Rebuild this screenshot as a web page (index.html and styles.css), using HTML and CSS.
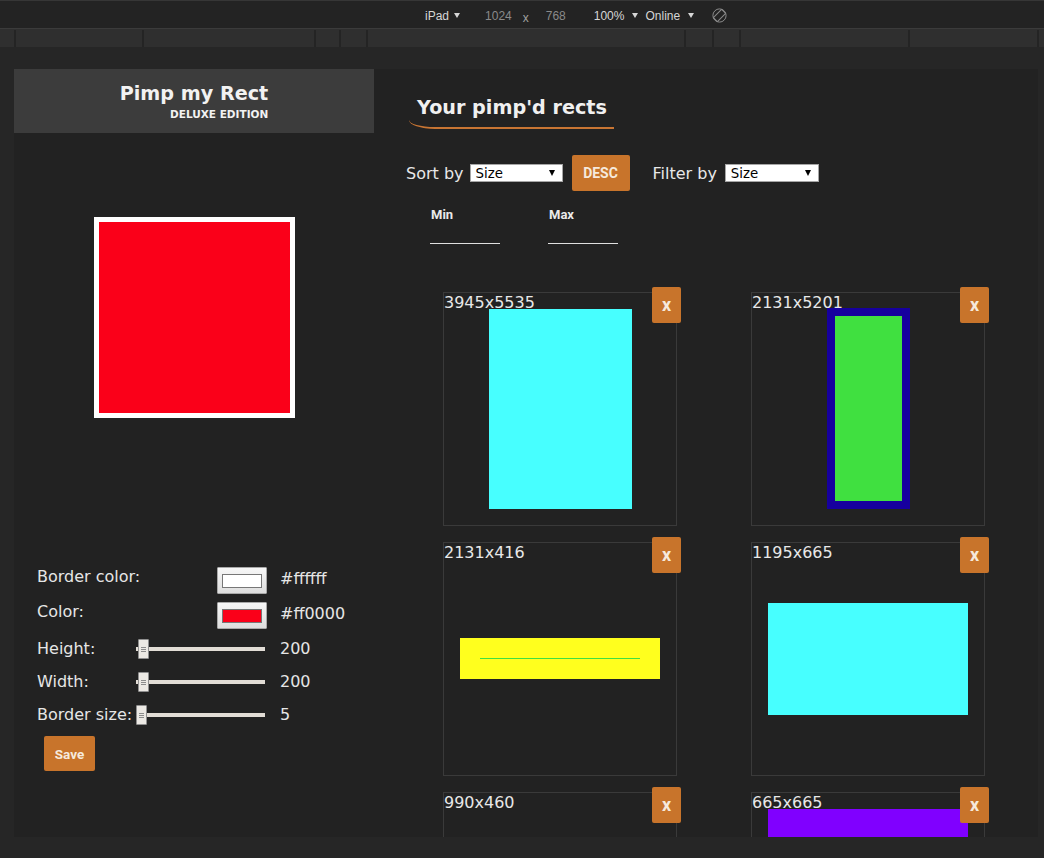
FILE: index.html
```html
<!DOCTYPE html>
<html lang="en">
<head>
<meta charset="utf-8">
<title>Pimp my Rect</title>
<link rel="stylesheet" href="styles.css">
</head>
<body>
<div class="toolbar">
  <span class="tb-text">iPad</span><span class="tb-caret tb-caret-1"></span>
  <span class="tb-dim tb-w">1024</span>
  <span class="tb-times">x</span>
  <span class="tb-dim tb-h">768</span>
  <span class="tb-text tb-zoom">100%</span><span class="tb-caret tb-caret-2"></span>
  <span class="tb-text tb-online">Online</span><span class="tb-caret tb-caret-3"></span>
  <svg class="tb-rotate" width="15" height="15" viewBox="0 0 15 15" aria-hidden="true">
    <circle cx="7.5" cy="7.5" r="6.6" fill="none" stroke="#8a8a8a" stroke-width="1"/>
    <rect x="4.6" y="1.6" width="5.8" height="11.8" rx="0.8" fill="none" stroke="#8a8a8a" stroke-width="1" transform="rotate(45 7.5 7.5)"/>
  </svg>
</div>
<div class="mqbar">
  <span class="seg s1"></span><span class="seg s2"></span><span class="seg s3"></span><span class="seg s4"></span><span class="seg s5"></span><span class="seg s6"></span><span class="seg s7"></span><span class="seg s8"></span><span class="seg s9"></span><span class="seg s10"></span><span class="seg s11"></span>
</div>
<div class="gap-strip"></div>
<div class="viewport">
  <aside class="left">
    <header class="brand">
      <div class="brand-inner">
        <div class="brand-title">Pimp my Rect</div>
        <div class="brand-sub">DELUXE EDITION</div>
      </div>
    </header>
    <div class="preview"></div>
    <div class="controls">
      <span class="c-label">Border color:</span>
      <span class="c-ctl c-ctl-color"><span class="color-input"><span class="swatch swatch-white"></span></span></span>
      <span class="c-val c-val-color">#ffffff</span>

      <span class="c-label">Color:</span>
      <span class="c-ctl c-ctl-color"><span class="color-input"><span class="swatch swatch-red"></span></span></span>
      <span class="c-val c-val-color">#ff0000</span>

      <span class="c-label">Height:</span>
      <span class="c-ctl"><span class="slider"><span class="track"></span><span class="thumb"><span class="grip"></span></span></span></span>
      <span class="c-val">200</span>

      <span class="c-label">Width:</span>
      <span class="c-ctl"><span class="slider"><span class="track"></span><span class="thumb"><span class="grip"></span></span></span></span>
      <span class="c-val">200</span>

      <span class="c-label">Border size:</span>
      <span class="c-ctl"><span class="slider"><span class="track"></span><span class="thumb thumb-min"><span class="grip"></span></span></span></span>
      <span class="c-val">5</span>
    </div>
    <button class="btn save">Save</button>
  </aside>

  <main class="right">
    <h2 class="title">Your pimp'd rects</h2>
    <div class="sortbar">
      <span class="bar-label">Sort by</span>
      <span class="select sel-sort"><span class="sel-text">Size</span><span class="sel-caret"></span></span>
      <button class="btn desc">DESC</button>
      <span class="bar-label filter-label">Filter by</span>
      <span class="select sel-filter"><span class="sel-text">Size</span><span class="sel-caret"></span></span>
    </div>
    <div class="range">
      <div class="range-field">
        <span class="range-label">Min</span>
        <input class="range-input" type="text" aria-label="Min">
      </div>
      <div class="range-field range-max">
        <span class="range-label">Max</span>
        <input class="range-input" type="text" aria-label="Max">
      </div>
    </div>
    <div class="cards">
      <div class="card">
        <div class="rect" style="width:143px;height:200px;background:#47ffff"></div>
        <span class="card-label">3945x5535</span>
        <button class="btn del">x</button>
      </div>
      <div class="card">
        <div class="rect rect-odd" style="width:83px;height:201px;background:#40e040;border:8px solid #16009e"></div>
        <span class="card-label">2131x5201</span>
        <button class="btn del">x</button>
      </div>
      <div class="card">
        <div class="rect rect-odd" style="width:200px;height:41px;background:#40e040;border:20px solid #ffff1e"></div>
        <span class="card-label">2131x416</span>
        <button class="btn del">x</button>
      </div>
      <div class="card">
        <div class="rect" style="width:200px;height:112px;background:#47ffff"></div>
        <span class="card-label">1195x665</span>
        <button class="btn del">x</button>
      </div>
      <div class="card">
        <div class="rect rect-odd" style="width:200px;height:93px;background:#ff8c00"></div>
        <span class="card-label">990x460</span>
        <button class="btn del">x</button>
      </div>
      <div class="card">
        <div class="rect" style="width:200px;height:200px;background:#8000ff"></div>
        <span class="card-label">665x665</span>
        <button class="btn del">x</button>
      </div>
    </div>
  </main>
</div>
</body>
</html>
```
FILE: styles.css
```css
* { box-sizing: border-box; }
html, body { margin: 0; padding: 0; }
body {
  width: 1044px;
  height: 858px;
  overflow: hidden;
  background: #262626;
  font-family: "DejaVu Sans", Verdana, sans-serif;
}

/* ---------- devtools toolbar ---------- */
.toolbar {
  height: 29px;
  background: #232323;
  border-top: 1px solid #363636;
  border-bottom: 1px solid #3b3b3b;
  display: flex;
  align-items: center;
  padding-left: 425px;
  padding-top: 3px;
  font-family: "Liberation Sans", Arial, sans-serif;
  font-size: 12px;
  color: #d6d6d6;
}
.tb-text { color: #d6d6d6; }
.tb-dim { color: #8a8a8a; }
.tb-times { color: #a0a0a0; margin-left: 11px; position: relative; top: 2px; }
.tb-caret {
  width: 0; height: 0;
  border-left: 3px solid transparent;
  border-right: 3px solid transparent;
  border-top: 5px solid #d6d6d6;
  position: relative;
  top: -1px;
}
.tb-caret-1 { margin-left: 5px; }
.tb-w { margin-left: 25px; }
.tb-h { margin-left: 17px; }
.tb-zoom { margin-left: 28px; }
.tb-caret-2 { margin-left: 8px; }
.tb-online { margin-left: 7px; }
.tb-caret-3 { margin-left: 8px; }
.tb-rotate { margin-left: 18px; position: relative; top: -1px; }

/* ---------- media query ruler ---------- */
.mqbar {
  height: 18px;
  background: #2f2f2f;
  display: flex;
  padding-top: 1px;
}
.seg { height: 17px; border-right: 2px solid #242424; }
.s1 { width: 16px; }
.s2 { width: 128px; }
.s3 { width: 172px; }
.s4 { width: 25px; }
.s5 { width: 27px; }
.s6 { width: 318px; }
.s7 { width: 28px; }
.s8 { width: 27px; }
.s9 { width: 169px; }
.s10 { width: 129px; }
.s11 { flex: 1; border-right: 0; }
.gap-strip { height: 22px; }

/* ---------- emulated viewport ---------- */
.viewport {
  margin-left: 14px;
  width: 1024px;
  height: 768px;
  background: #222222;
  overflow: hidden;
  display: flex;
  color: #e6e6e6;
  font-size: 16px;
}

/* ---------- left column ---------- */
.left { width: 360px; flex: none; }
.brand {
  height: 64px;
  background: #3c3c3c;
  display: flex;
  justify-content: center;
  padding-top: 14px;
}
.brand-inner { text-align: right; color: #f2f2f2; }
.brand-title { font-weight: bold; font-size: 19.2px; line-height: 22px; }
.brand-sub { font-weight: bold; font-size: 10.5px; line-height: 13px; margin-top: 2.5px; }

.preview {
  width: 201px;
  height: 201px;
  margin: 84px auto 0;
  border: 5px solid #ffffff;
  background: #fa0019;
}

.controls {
  margin-top: 149px;
  padding-left: 23px;
  display: grid;
  grid-template-columns: 99px 131px auto;
  grid-template-rows: 35px 37px 33px 33px 31px;
  align-items: start;
}
.c-label { white-space: nowrap; line-height: 19px; }
.c-ctl { display: flex; }
.c-ctl-color { justify-content: flex-end; }
.c-val { line-height: 19px; padding-left: 13px; }
.c-val-color { padding-top: 2px; }

.color-input {
  width: 50px;
  height: 27px;
  border: 1px solid #a9a9a9;
  border-radius: 1px;
  background: linear-gradient(#f7f7f7, #dedede);
  display: flex;
  align-items: center;
  justify-content: center;
}
.swatch { width: 40px; height: 14px; border: 1px solid #777777; }
.swatch-white { background: #ffffff; }
.swatch-red { background: #fa0019; }

.slider { position: relative; width: 129px; height: 20px; }
.track { display: block; height: 4px; margin-top: 8px; background: #e2ddd6; }
.thumb {
  position: absolute;
  left: 2px;
  top: 0;
  width: 11px;
  height: 20px;
  background: #ece9e4;
  border: 1px solid #8f8f8f;
  border-radius: 1px;
}
.thumb-min { left: 0; }
.grip {
  display: block;
  width: 5px;
  height: 5px;
  margin: 7px auto 0;
  background: repeating-linear-gradient(to bottom, #8c8c8c 0 1px, transparent 1px 2px);
}

.btn {
  border: 0;
  border-radius: 2px;
  background: #c8742b;
  color: #f6e9dc;
  font-family: Roboto, "Liberation Sans", sans-serif;
  font-weight: bold;
  padding: 0;
  cursor: pointer;
}
.save {
  display: block;
  width: 51px;
  height: 35px;
  margin-left: 30px;
  font-size: 13.5px;
}

/* ---------- right column ---------- */
.right { flex: 1; padding-top: 28px; }
.title {
  display: inline-block;
  margin: 0 0 0 35px;
  padding: 0 7px 8px 8px;
  font-size: 19.2px;
  line-height: 22px;
  font-weight: bold;
  color: #f0f0f0;
  border-bottom: 2px solid #c87533;
  border-bottom-left-radius: 26px 9px;
}

.sortbar {
  margin-top: 26px;
  height: 36px;
  padding-left: 32px;
  display: flex;
  align-items: center;
}
.bar-label { color: #e8e8e8; }
.select {
  width: 93px;
  height: 18px;
  background: #ffffff;
  border: 1px solid #a6a6a6;
  display: flex;
  align-items: center;
  justify-content: space-between;
  padding: 0 7px 0 5px;
  color: #000;
  font-size: 13.33px;
}
.sel-sort { margin-left: 6px; }
.sel-filter { margin-left: 8px; width: 94px; }
.sel-text { line-height: 16px; padding-top: 1px; }
.sel-caret {
  width: 0; height: 0;
  border-left: 3px solid transparent;
  border-right: 3px solid transparent;
  border-top: 6px solid #000;
}
.desc {
  width: 58px;
  height: 36px;
  margin-left: 9px;
  font-size: 14px;
}
.filter-label { margin-left: 23px; }

.range {
  margin-top: 16px;
  padding-left: 56px;
  display: flex;
}
.range-field { display: flex; flex-direction: column; width: 70px; }
.range-max { margin-left: 48px; }
.range-label {
  font-family: Roboto, "Liberation Sans", sans-serif;
  font-weight: bold;
  font-size: 13px;
  line-height: 15px;
  padding-left: 1px;
  color: #eaeaea;
}
.range-input {
  width: 70px;
  height: 21px;
  margin-top: 1px;
  border: 0;
  border-bottom: 1px solid #e0e0e0;
  background: transparent;
  color: #e6e6e6;
  outline: none;
}

.cards {
  margin-top: 48px;
  padding-left: 69px;
  display: grid;
  grid-template-columns: 234px 234px;
  grid-auto-rows: 234px;
  column-gap: 74px;
  row-gap: 16px;
}
.card {
  position: relative;
  border: 1px solid #3a3a3a;
  display: flex;
  align-items: center;
  justify-content: center;
}
.rect { flex: none; }
.rect-odd { margin-bottom: 1px; }
.card-label {
  position: absolute;
  top: 0;
  left: 0;
  color: #e8e8e8;
  font-size: 16px;
}
.del {
  position: absolute;
  top: -6px;
  right: -5px;
  width: 29px;
  height: 36px;
  font-size: 18px;
  line-height: 30px;
}
```
